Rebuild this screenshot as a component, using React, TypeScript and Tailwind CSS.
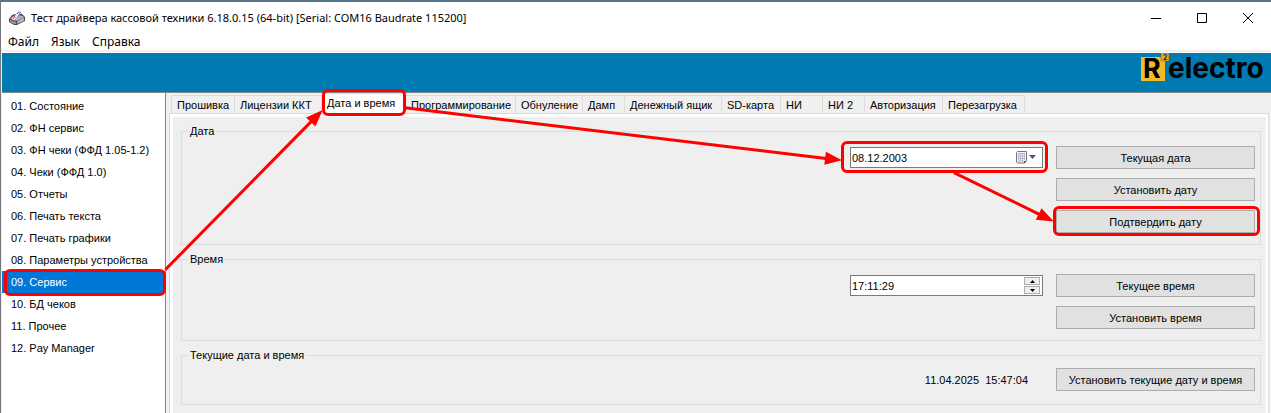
import { useLayoutEffect, useRef, useState } from "react";
import type { ReactNode } from "react";
import { clsx } from "clsx";

const sections = [
  "01. Состояние",
  "02. ФН сервис",
  "03. ФН чеки (ФФД 1.05-1.2)",
  "04. Чеки (ФФД 1.0)",
  "05. Отчеты",
  "06. Печать текста",
  "07. Печать графики",
  "08. Параметры устройства",
  "09. Сервис",
  "10. БД чеков",
  "11. Прочее",
  "12. Pay Manager",
];

const tabs = [
  { label: "Прошивка", width: "w-16" },
  { label: "Лицензии ККТ", width: "w-[87px]" },
  { label: "Дата и время", width: "w-[84px]" },
  { label: "Программирование", width: "w-[110px]" },
  { label: "Обнуление", width: "w-[67px]" },
  { label: "Дамп", width: "w-[42px]" },
  { label: "Денежный ящик", width: "w-[97px]" },
  { label: "SD-карта", width: "w-[59px]" },
  { label: "НИ", width: "w-[42px]" },
  { label: "НИ 2", width: "w-[42px]" },
  { label: "Авторизация", width: "w-[78px]" },
  { label: "Перезагрузка", width: "w-[82px]" },
];

const menu = ["Файл", "Язык", "Справка"];

// Each arrow joins two marked frames; x and y are fractions of the frame size.
const links = [
  { from: { id: "section", x: 1, y: 0 }, to: { id: "tab", x: 0, y: 0.8 } },
  { from: { id: "tab", x: 1, y: 0.7 }, to: { id: "date", x: 0, y: 0.6 } },
  { from: { id: "date", x: 0.55, y: 1 }, to: { id: "confirm", x: 0, y: 0.5 } },
];

type Line = { x1: number; y1: number; x2: number; y2: number };

function Mark({ id, className }: { id: string; className: string }) {
  return (
    <span
      data-mark={id}
      className={clsx("pointer-events-none absolute z-10 rounded-md border-3 border-[#fe0000]", className)}
    />
  );
}

function Arrows() {
  const ref = useRef<SVGSVGElement>(null);
  const [lines, setLines] = useState<Line[]>([]);

  useLayoutEffect(() => {
    const point = ({ id, x, y }: { id: string; x: number; y: number }) => {
      const base = ref.current!.getBoundingClientRect();
      const box = document.querySelector(`[data-mark="${id}"]`)!.getBoundingClientRect();
      return { x: box.left - base.left + box.width * x, y: box.top - base.top + box.height * y };
    };

    const update = () =>
      setLines(
        links.map(({ from, to }) => {
          const a = point(from);
          const b = point(to);
          return { x1: a.x, y1: a.y, x2: b.x, y2: b.y };
        }),
      );

    update();
    window.addEventListener("resize", update);
    return () => window.removeEventListener("resize", update);
  }, []);

  return (
    <svg ref={ref} className="pointer-events-none absolute inset-0 z-20 h-full w-full" aria-hidden="true">
      {lines.map((line, index) => {
        const length = Math.hypot(line.x2 - line.x1, line.y2 - line.y1);
        const angle = (Math.atan2(line.y2 - line.y1, line.x2 - line.x1) * 180) / Math.PI;
        return (
          <g key={index} transform={`translate(${line.x1} ${line.y1}) rotate(${angle})`} fill="#fe0000">
            <rect x="-1" y="-1.5" width={length - 12} height="3" />
            <path d={`M${length + 1} 0 L${length - 16} -6.5 V6.5 Z`} />
          </g>
        );
      })}
    </svg>
  );
}

function PrinterIcon() {
  return (
    <svg className="h-4 w-4 shrink-0" viewBox="0 0 16 16" aria-hidden="true">
      <path d="M0 9 L3 5 L6 4 L13 4 L16 7 L16 11 L8 15 L5 15 L0 12 Z" fill="#4a4a4a" />
      <path d="M1 9 L4 6 L8 5 L14 6 L15 8 L8 11 Z" fill="#b0b0b0" />
      <path d="M1 10 L7 12 V14 L5 14 L1 12 Z" fill="#949494" />
      <path d="M8 12 L15 8 V11 L8 14 Z" fill="#a5a5a5" />
      <path d="M6 7 L7 3 L10 0 L12 1 L10 7 Z" fill="#f1f2fb" />
      <path d="M8 4 L10 1.500 M9 7 L11.500 2" stroke="#3b4bd8" />
      <path d="M4 6 L6 5 V7 Z" fill="#e33" />
      <path d="M3 9 L6 10 M5 8 L8 9 M9 12 L14 9.500" stroke="#ddd" />
    </svg>
  );
}

function TitleBar() {
  return (
    <header className="flex h-[31px] items-center bg-white pl-2 font-['Noto_Sans','Open_Sans',sans-serif]">
      <PrinterIcon />
      <h1 className="ml-1.5 flex-1 truncate text-[11px] leading-4 text-black">
        Тест драйвера кассовой техники 6.18.0.15 (64-bit) [Serial: COM16 Baudrate 115200]
      </h1>
      <div className="flex h-full">
        <button type="button" aria-label="Свернуть" className="flex w-[46px] items-center justify-center">
          <svg width="10" height="10" viewBox="0 0 10 10">
            <path d="M0 5.500 H10" stroke="#000" />
          </svg>
        </button>
        <button type="button" aria-label="Развернуть" className="flex w-[46px] items-center justify-center">
          <svg width="10" height="10" viewBox="0 0 10 10">
            <path d="M0.500 0.500 H9.500 V9.500 H0.500 Z" fill="none" stroke="#000" />
          </svg>
        </button>
        <button type="button" aria-label="Закрыть" className="flex w-[46px] items-center justify-center">
          <svg width="10" height="10" viewBox="0 0 10 10">
            <path d="M0 0 L10 10 M10 0 L0 10" stroke="#000" />
          </svg>
        </button>
      </div>
    </header>
  );
}

function Logo() {
  return (
    <svg width="130" height="36" viewBox="0 0 130 36" role="img" aria-label="R2 electro">
      <rect x="1" y="4" width="24" height="24" fill="#f3ba27" />
      <rect x="21" y="0" width="8" height="8" fill="#e3ae2b" stroke="#6f5a1c" strokeWidth="0.500" />
      <text x="3" y="25" fontFamily="Inter, sans-serif" fontWeight="700" fontSize="27" fill="#000">
        R
      </text>
      <text x="23" y="7" fontFamily="Inter, sans-serif" fontWeight="700" fontSize="7" fill="#222">
        2
      </text>
      <text x="28" y="25" fontFamily="Inter, sans-serif" fontWeight="700" fontSize="28" fill="#000">
        electro
      </text>
    </svg>
  );
}

function ActionButton({ children }: { children: ReactNode }) {
  return (
    <button
      type="button"
      className="h-[23px] w-full border border-[#adadad] bg-[#e1e1e1] text-center whitespace-nowrap hover:bg-[#e5f1fb]"
    >
      {children}
    </button>
  );
}

function Group({ title, className, children }: { title: string; className?: string; children: ReactNode }) {
  return (
    <fieldset className="min-w-0 border border-[#dcdcdc]">
      <legend className="ml-1.5 h-[13px] px-0.5 leading-[13px]">{title}</legend>
      <div className={clsx("flex justify-end pr-[5px]", className ?? "pt-2 pb-[11px]")}>{children}</div>
    </fieldset>
  );
}

function DateField() {
  return (
    <div className="relative mt-px flex h-[21px] w-[193px] items-center border border-[#7a7a7a] bg-white">
      <input
        type="text"
        aria-label="Дата"
        defaultValue="08.12.2003"
        className="min-w-0 flex-1 bg-transparent pl-px outline-none"
      />
      <button type="button" aria-label="Открыть календарь" className="mr-[5px]">
        <svg width="21" height="13" viewBox="0 0 21 13">
          <path d="M1.500 0.500 H10.500 V9.500 L8.500 12 H1.500 L0.500 11 V1.500 Z" fill="#f4f4f4" stroke="#7b7472" />
          <path d="M2 2.500 H9 M2 5 H9 M2 7.500 H9 M2 10 H8 M2.500 2 V10 M4.500 2 V10 M6.500 2 V10 M8.500 2 V9" stroke="#aab4c4" strokeWidth="0.800" />
          <path d="M8 12.500 V10 H11 Z" fill="#5f5856" />
          <path d="M13 4 H20 L16.500 8 Z" fill="#44598a" />
        </svg>
      </button>
      <Mark id="date" className="-top-[7px] -right-[6px] -bottom-[6px] -left-[10px]" />
    </div>
  );
}

function TimeField() {
  return (
    <div className="mt-px flex h-[21px] w-[193px] items-center border border-[#7a7a7a] bg-white">
      <input
        type="text"
        aria-label="Время"
        defaultValue="17:11:29"
        className="min-w-0 flex-1 bg-transparent pl-px outline-none"
      />
      <div className="mr-0.5 flex flex-col gap-px">
        <button
          type="button"
          aria-label="Увеличить"
          className="flex h-2 w-4 items-center justify-center border border-[#adadad] bg-[#f0f0f0]"
        >
          <svg width="5" height="3" viewBox="0 0 5 3">
            <path d="M0 3 L2.500 0 L5 3 Z" />
          </svg>
        </button>
        <button
          type="button"
          aria-label="Уменьшить"
          className="flex h-2 w-4 items-center justify-center border border-[#adadad] bg-[#f0f0f0]"
        >
          <svg width="5" height="3" viewBox="0 0 5 3">
            <path d="M0 0 L2.500 3 L5 0 Z" />
          </svg>
        </button>
      </div>
    </div>
  );
}

export default function App() {
  const [section, setSection] = useState("09. Сервис");
  const [tab, setTab] = useState("Дата и время");

  return (
    <div className="relative flex min-h-screen flex-col border-t-2 border-l border-t-[#56748a] border-l-[#77777b] bg-[#f0f0f0] font-['Liberation_Sans',Arial,sans-serif] text-[11px] leading-[14px] text-black">
      <TitleBar />

      <nav className="flex h-[17px] items-center gap-3 bg-white pl-[7px] font-['Noto_Sans','Open_Sans',sans-serif] text-xs">
        {menu.map((item) => (
          <button key={item} type="button" className="leading-[17px]">
            {item}
          </button>
        ))}
      </nav>
      <div className="h-[3px] border-b border-white" />

      <div className="ml-px flex h-[39px] justify-end bg-[#007bb1] pr-px">
        <Logo />
      </div>

      <div className="ml-px flex flex-1 border-t border-[#828790]">
        <nav className="w-[164px] shrink-0 border-r border-[#828790] bg-white pt-0.5">
          <ul>
            {sections.map((item) => (
              <li key={item} className="relative">
                <button
                  type="button"
                  onClick={() => setSection(item)}
                  className={clsx(
                    "h-[22px] w-full pl-[9px] text-left whitespace-nowrap",
                    item === section && "bg-[#0078d7] text-white",
                  )}
                >
                  {item}
                </button>
                {item === "09. Сервис" && <Mark id="section" className="-top-0.5 -right-px -bottom-[3px] left-0.5" />}
              </li>
            ))}
          </ul>
        </nav>

        <main className="flex min-w-0 flex-1 flex-col pr-0.5 pl-[3px]">
          <div role="tablist" className="flex h-5 items-end pl-0.5">
            {tabs.map(({ label, width }) => (
              <button
                key={label}
                type="button"
                role="tab"
                aria-selected={label === tab}
                onClick={() => setTab(label)}
                className={clsx(
                  "relative border-t border-r border-[#dcdcdc] pl-[5px] text-left whitespace-nowrap first:border-l",
                  width,
                  label === tab ? "h-5 bg-white pb-0.5" : "h-[18px]",
                )}
              >
                {label}
                {label === "Дата и время" && <Mark id="tab" className="-top-[5px] -right-px -bottom-[3px] left-0" />}
              </button>
            ))}
          </div>

          <div role="tabpanel" className="flex-1 border border-b-0 border-[#dcdcdc]">
            <div className="flex h-full flex-col gap-2 border-t-3 border-r-2 border-l-3 border-white bg-[#efefef] pt-2 pr-[5px] pb-2 pl-2">
              <Group title="Дата">
                <div className="flex flex-1 items-start justify-end gap-[13px]">
                  <DateField />
                  <div className="flex w-[199px] flex-col gap-[9px]">
                    <ActionButton>Текущая дата</ActionButton>
                    <ActionButton>Установить дату</ActionButton>
                    <div className="relative">
                      <ActionButton>Подтвердить дату</ActionButton>
                      <Mark id="confirm" className="-top-1 -right-[5px] -bottom-[3px] -left-[3px]" />
                    </div>
                  </div>
                </div>
              </Group>

              <Group title="Время">
                <div className="flex flex-1 items-start justify-end gap-[13px]">
                  <TimeField />
                  <div className="flex w-[199px] flex-col gap-[9px]">
                    <ActionButton>Текущее время</ActionButton>
                    <ActionButton>Установить время</ActionButton>
                  </div>
                </div>
              </Group>

              <Group title="Текущие дата и время" className="pt-1.5 pb-[13px]">
                <div className="flex flex-1 items-center justify-end gap-7">
                  <output className="whitespace-pre">11.04.2025  15:47:04</output>
                  <div className="w-[199px]">
                    <ActionButton>Установить текущие дату и время</ActionButton>
                  </div>
                </div>
              </Group>
            </div>
          </div>
        </main>
      </div>

      <Arrows />
    </div>
  );
}
